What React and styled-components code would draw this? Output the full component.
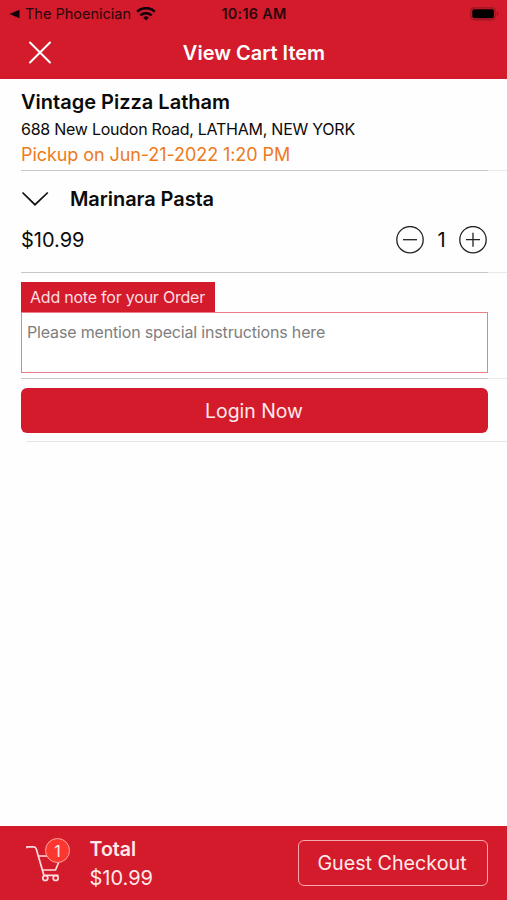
import React from "react";
import styled, { createGlobalStyle } from "styled-components";

const RED = "#d31b2c";

const GlobalStyle = createGlobalStyle`
  *, *::before, *::after { box-sizing: border-box; }
  body { margin: 0; background: #fff; font-family: Inter, "Liberation Sans", sans-serif; }
  button, textarea { font-family: inherit; margin: 0; }
`;

const Screen = styled.div`
  width: 507px;
  height: 900px;
  display: flex;
  flex-direction: column;
  background: #fefefe;
  color: #0b0b0b;
  overflow: hidden;
`;

const Text = styled.span`
  display: block;
  white-space: nowrap;
  font-size: ${(p) => p.$size}px;
  line-height: ${(p) => p.$line || p.$size}px;
  font-weight: ${(p) => p.$weight || 400};
  letter-spacing: ${(p) => p.$track || 0}px;
  color: ${(p) => p.$color || "inherit"};
`;

const Header = styled.header`
  height: 79px;
  background: ${RED};
`;

const StatusBar = styled.div`
  height: 28px;
  padding: 0 8px 0 9px;
  display: grid;
  grid-template-columns: 1fr auto 1fr;
  align-items: center;
  color: #2b060b;
`;

const BackLink = styled.div`
  display: flex;
  align-items: center;
  gap: 5px;
`;

const BatterySlot = styled.div`
  display: flex;
  justify-content: flex-end;
`;

const NavBar = styled.nav`
  height: 49px;
  padding: 0 27px 0 28px;
  display: grid;
  grid-template-columns: 60px 1fr 60px;
  align-items: center;
  justify-items: center;
  color: #fff;
`;

const IconButton = styled.button`
  display: flex;
  padding: 0;
  border: 0;
  background: none;
  color: inherit;
  justify-self: start;
`;

const Section = styled.section`
  height: ${(p) => p.$height}px;
  padding: ${(p) => p.$pad};
`;

const Divider = styled.div`
  height: 1px;
  margin-left: 21px;
  display: flex;
  background: #e9e9eb;
  &::before { content: ""; width: 467px; background: #c6c6c8; }
`;

const LightDivider = styled.div`
  height: 1px;
  margin: 8px 0 0 26px;
  background: #e6e6e8;
`;

const ItemHeading = styled.div`
  display: flex;
  align-items: center;
  gap: 21px;
`;

const PriceRow = styled.div`
  display: flex;
  align-items: center;
  justify-content: space-between;
  margin-top: 13px;
`;

const Stepper = styled.div`
  display: flex;
  align-items: center;
  gap: 12px;
`;

const Quantity = styled.div`
  width: 11px;
  display: flex;
  justify-content: center;
`;

const NoteTag = styled.div`
  width: 194px;
  height: 30px;
  padding: 3px 9px;
  background: ${RED};
`;

const NoteField = styled.textarea`
  display: block;
  width: 467px;
  height: 61px;
  padding: 8px 5px;
  border: 1px solid #e8808a;
  border-radius: 0;
  resize: none;
  outline: none;
  background: #fff;
  font-size: 16px;
  line-height: 22px;
  letter-spacing: -0.17px;
  &::placeholder { color: #7e7e7e; opacity: 1; }
`;

const LoginButton = styled.button`
  display: flex;
  align-items: center;
  justify-content: center;
  width: 467px;
  height: 45px;
  margin: 9px 0 0 21px;
  padding: 0 1px 0 0;
  border: 0;
  border-radius: 6px;
  background: ${RED};
  color: #ffe9ea;
`;

const Footer = styled.footer`
  height: 74px;
  margin-top: auto;
  padding: 0 19px 0 26px;
  display: flex;
  align-items: center;
  background: ${RED};
  color: #ffe9ea;
`;

const CartWrap = styled.div`
  position: relative;
  width: 44px;
  height: 46px;
`;

const Badge = styled.span`
  position: absolute;
  left: 19px;
  top: -2px;
  width: 25px;
  height: 25px;
  display: flex;
  align-items: center;
  justify-content: center;
  border: 1.5px solid #ffa39e;
  border-radius: 50%;
  background: #fb3730;
`;

const Totals = styled.div`
  margin: 1px 0 0 19.5px;
  flex: 1;
`;

const GuestButton = styled.button`
  width: 190px;
  height: 46px;
  display: flex;
  align-items: center;
  justify-content: center;
  border: 1.5px solid #f9a9ae;
  border-radius: 6px;
  background: none;
  color: inherit;
  padding: 0 2px 0 0;
`;

const WifiIcon = () => (
  <svg width="20" height="14" viewBox="0 0 20 14" fill="none" stroke="#12030a" strokeWidth="2.8">
    <path d="M1.2 4.8a12.6 12.6 0 0 1 17.6 0" />
    <path d="M4.4 8.4a7.8 7.8 0 0 1 11.2 0" />
    <path d="M10 13.4 7.2 10.7a4 4 0 0 1 5.6 0z" fill="#12030a" stroke="none" />
  </svg>
);

const BatteryIcon = () => (
  <svg width="29" height="14" viewBox="0 0 29 14">
    <rect x=".8" y=".8" width="24.4" height="12" rx="3.5" fill="none" stroke="#9c1622" strokeWidth="1.2" />
    <rect x="2.3" y="2.3" width="21.6" height="9" rx="2" fill="#000" />
    <path d="M26.8 4.6c2 .5 2 3.9 0 4.4z" fill="#9c1622" />
  </svg>
);

const CartIcon = () => (
  <svg width="44" height="46" viewBox="0 0 44 46" fill="none" stroke="#ffdcde" strokeWidth="1.7">
    <path d="M1 8.3V6.8H7.6Q9.600 6.800 10.200 8.800L17.900 35.300H32.500" />
    <path d="M12.500 16H22M17 30H29.500L33 21.500" />
    <circle cx="19.300" cy="38" r="2.500" />
    <circle cx="29.700" cy="38" r="2.500" />
  </svg>
);

const StepIcon = ({ plus }) => (
  <svg width="28" height="28" viewBox="0 0 28 28" fill="none" stroke="#222" strokeWidth="1.3">
    <circle cx="14" cy="13.7" r="13.2" />
    <path d={plus ? "M7 13.700h14M14 6.700v14" : "M7 13.700h14"} />
  </svg>
);

export default function App() {
  return (
    <>
      <GlobalStyle />
      <Screen>
        <Header>
          <StatusBar>
            <BackLink>
              <svg width="11" height="10" viewBox="0 0 11 10"><path d="M.5 5 10.500 .8v8.400z" fill="#12030a" /></svg>
              <Text $size={14.5}>The Phoenician</Text>
              <WifiIcon />
            </BackLink>
            <Text $size={14.4} $weight={600} $track={0.3}>10:16 AM</Text>
            <BatterySlot><BatteryIcon /></BatterySlot>
          </StatusBar>
          <NavBar>
            <IconButton aria-label="Close">
              <svg width="24" height="24" viewBox="0 0 24 24" stroke="#fff" strokeWidth="2" strokeLinecap="round"><path d="m2 1.500 20 20M22 1.500l-20 20" /></svg>
            </IconButton>
            <Text $size={20} $weight={600} $line={28}>View Cart Item</Text>
          </NavBar>
        </Header>
        <Section $height={91} $pad="9px 21px 0">
          <Text $size={20} $line={28} $weight={600}>Vintage Pizza Latham</Text>
          <Text $size={16} $line={26} $track={-0.25}>688 New Loudon Road, LATHAM, NEW YORK</Text>
          <Text $size={18} $line={26} $track={-0.08} $color="#ed7a1c">Pickup on Jun-21-2022 1:20 PM</Text>
        </Section>
        <Divider />
        <Section $height={101} $pad="14px 20px 0 21px">
          <ItemHeading>
            <svg width="28" height="28" viewBox="0 0 28 28" fill="none" stroke="#111" strokeWidth="1.7"><path d="M1.500 7.500 14 19.700 26.800 7.500" /></svg>
            <Text $size={20} $line={28} $weight={600} $track={-0.08}>Marinara Pasta</Text>
          </ItemHeading>
          <PriceRow>
            <Text $size={20} $line={28}>$10.99</Text>
            <Stepper>
              <StepIcon />
              <Quantity><Text $size={20} $line={28}>1</Text></Quantity>
              <StepIcon plus />
            </Stepper>
          </PriceRow>
        </Section>
        <Divider />
        <Section $height={105} $pad="9px 21px 0">
          <NoteTag><Text $size={16} $line={24} $track={-0.22} $color="#ffdfe1">Add note for your Order</Text></NoteTag>
          <NoteField placeholder="Please mention special instructions here" />
        </Section>
        <Divider />
        <LoginButton><Text $size={19.4} $line={28}>Login Now</Text></LoginButton>
        <LightDivider />
        <Footer>
          <CartWrap>
            <CartIcon />
            <Badge><Text $size={16}>1</Text></Badge>
          </CartWrap>
          <Totals>
            <Text $size={19.6} $line={30} $weight={600}>Total</Text>
            <Text $size={20} $line={29}>$10.99</Text>
          </Totals>
          <GuestButton><Text $size={19.7} $line={28}>Guest Checkout</Text></GuestButton>
        </Footer>
      </Screen>
    </>
  );
}
